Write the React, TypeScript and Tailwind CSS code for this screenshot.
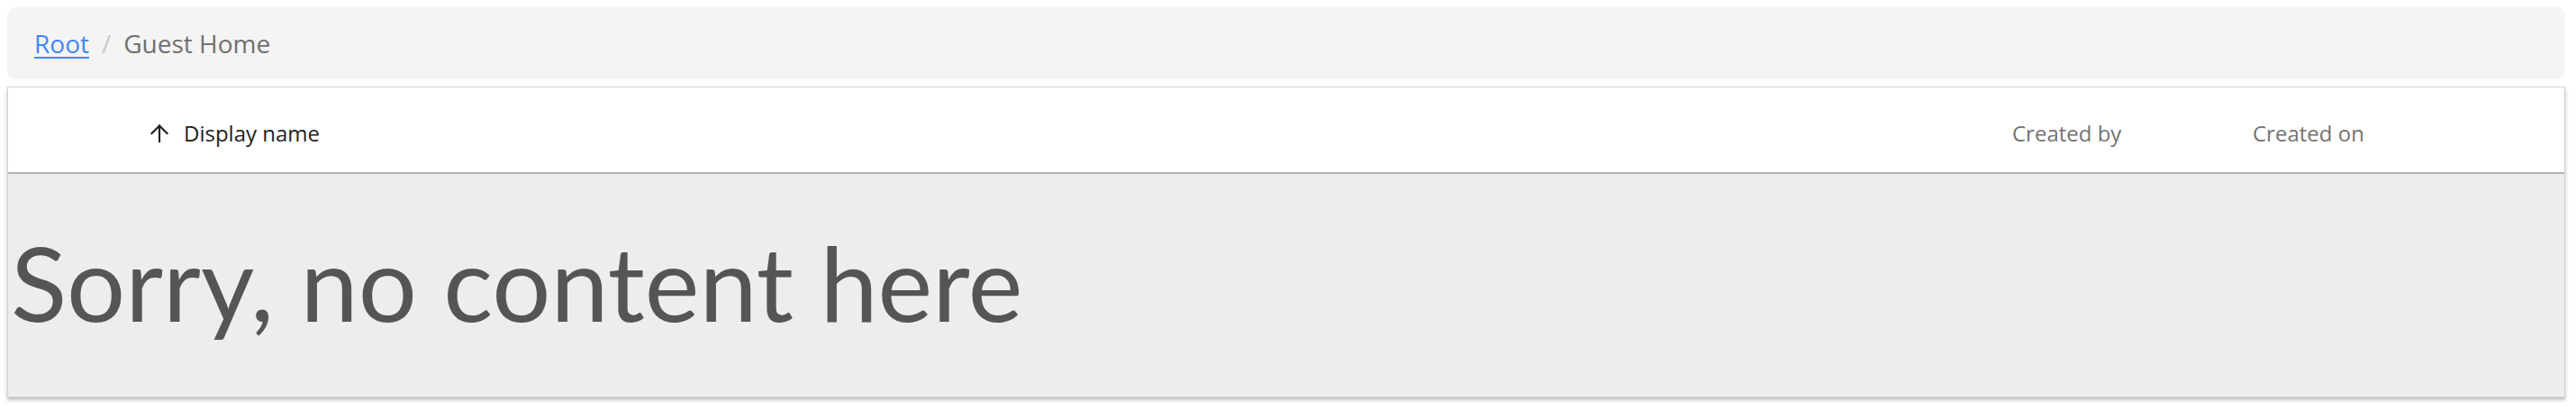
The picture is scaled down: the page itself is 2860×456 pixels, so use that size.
import React from "react";

const font = { fontFamily: '"Open Sans", "Noto Sans", sans-serif' };

function ArrowUpIcon() {
  return (
    <svg width="22" height="22" viewBox="0 0 22 22" fill="none" stroke="#222" strokeWidth="2.2" strokeLinecap="square">
      <path d="M11 20V2.5" />
      <path d="M2.5 11L11 2.5L19.5 11" />
    </svg>
  );
}

export default function App() {
  return (
    <div className="w-[2860px] h-[456px] bg-white p-2 pr-3 flex flex-col gap-2" style={font}>
      {/* Breadcrumb */}
      <nav className="h-[80px] rounded-[10px] bg-[#f4f4f4] flex items-center px-[30px] text-[28px]">
        <a href="#" className="text-[#3f86f5] underline underline-offset-4 decoration-2">Root</a>
        <span className="text-[#c8c8c8] px-[14px]">/</span>
        <span className="text-[#707070]">Guest Home</span>
      </nav>

      {/* Table */}
      <div className="flex flex-col border border-[#d2d2d2] shadow-[0_3px_4px_rgba(0,0,0,0.25)]">
        <div className="h-[96px] bg-white flex items-center pt-[8px] border-b-2 border-[#b5b5b5] text-[24px]">
          <div className="flex items-center gap-[16px] pl-[157px] flex-1 text-[#222]">
            <ArrowUpIcon />
            <span>Display name</span>
          </div>
          <div className="w-[267px] text-[#737373]">Created by</div>
          <div className="w-[346px] text-[#737373]">Created on</div>
        </div>
        <div className="h-[247px] bg-[#ededed] flex items-center">
          <p className="text-[115px] leading-none text-[#555] pl-[3px] pb-[8px]" style={{ fontFamily: '"Lato", sans-serif' }}>
            Sorry, no content here
          </p>
        </div>
      </div>
    </div>
  );
}
